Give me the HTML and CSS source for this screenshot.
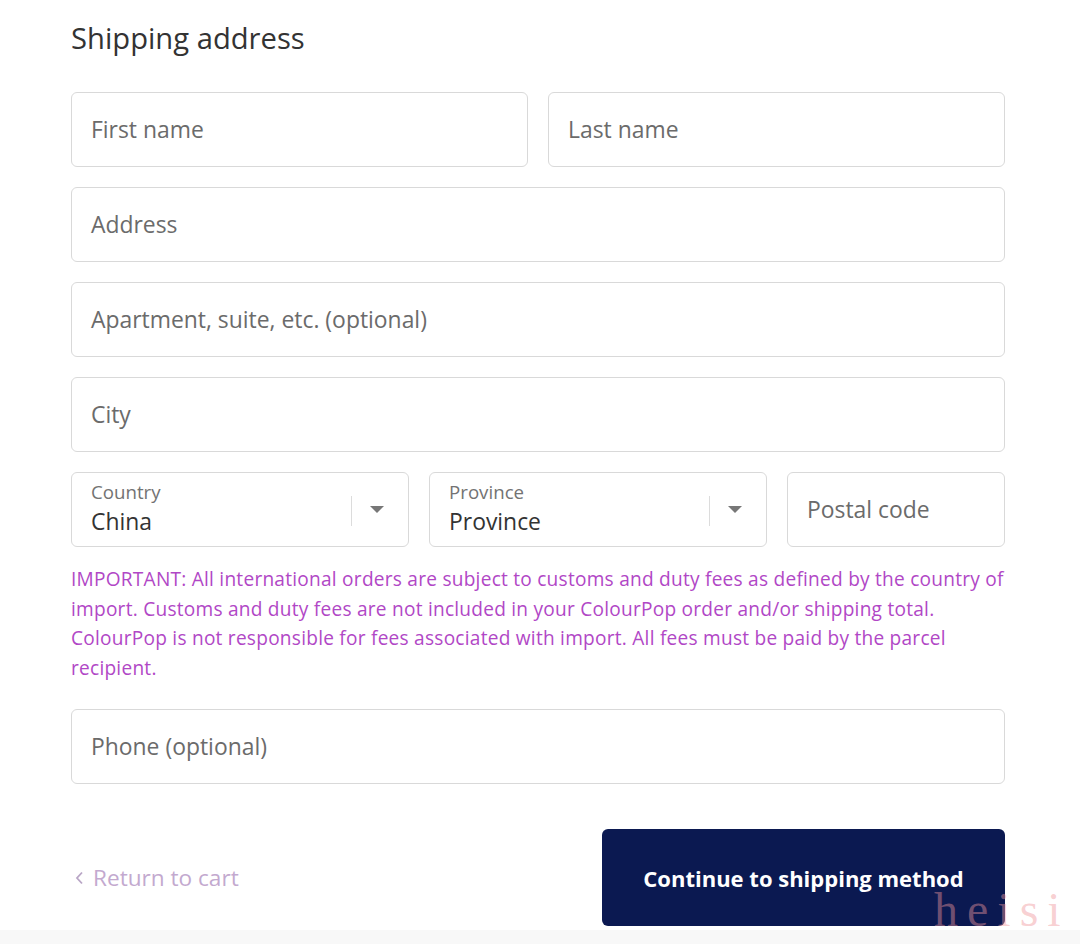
FILE: index.html
```html
<!DOCTYPE html>
<html>
<head>
<meta charset="utf-8">
<link rel="stylesheet" href="styles.css">
</head>
<body>
<div class="page">
  <h2 class="title">Shipping address</h2>
  <div class="fields">
    <div class="row">
      <div class="field half"><span class="ph">First name</span></div>
      <div class="field half"><span class="ph">Last name</span></div>
    </div>
    <div class="field"><span class="ph">Address</span></div>
    <div class="field"><span class="ph">Apartment, suite, etc. (optional)</span></div>
    <div class="field"><span class="ph">City</span></div>
    <div class="row">
      <div class="field select">
        <div class="sel-text">
          <span class="lbl">Country</span>
          <span class="val">China</span>
        </div>
        <span class="divider"></span>
        <span class="caret"></span>
      </div>
      <div class="field select">
        <div class="sel-text">
          <span class="lbl">Province</span>
          <span class="val">Province</span>
        </div>
        <span class="divider"></span>
        <span class="caret"></span>
      </div>
      <div class="field postal"><span class="ph">Postal code</span></div>
    </div>
  </div>
  <p class="note">IMPORTANT: All international orders are subject to customs and duty fees as defined by the country of import. Customs and duty fees are not included in your ColourPop order and/or shipping total. ColourPop is not responsible for fees associated with import. All fees must be paid by the parcel recipient.</p>
  <div class="field"><span class="ph">Phone (optional)</span></div>
  <div class="actions">
    <a class="back"><svg class="chev" width="9" height="14" viewBox="0 0 9 14"><path d="M7 1.5 L2 7 L7 12.5" fill="none" stroke="#b9a6c6" stroke-width="1.8"/></svg><span>Return to cart</span></a>
    <button class="btn">Continue to shipping method</button>
  </div>
</div>
<div class="strip"></div>
<div class="watermark">heisi</div>
</body>
</html>
```

FILE: styles.css
```css
html, body {
  margin: 0;
  padding: 0;
  background: #ffffff;
}
body {
  font-family: "Open Sans", "Noto Sans", sans-serif;
  color: #333333;
  position: relative;
  height: 944px;
  overflow: hidden;
}
.page {
  width: 934px;
  margin-left: 71px;
  padding-top: 18px;
}
.title {
  margin: 0;
  font-size: 29.2px;
  font-weight: 400;
  line-height: 40px;
  color: #333333;
}
.fields {
  margin-top: 34px;
  display: flex;
  flex-direction: column;
  gap: 20px;
}
.row {
  display: flex;
  gap: 20px;
}
.field {
  box-sizing: border-box;
  height: 75px;
  border: 1px solid #d9d9d9;
  border-radius: 6px;
  display: flex;
  align-items: center;
  padding: 0 19px;
  background: #ffffff;
}
.half {
  flex: 1;
}
.ph {
  font-size: 22.9px;
  color: #6b6b6b;
}
.select {
  flex: 0 0 338px;
  position: relative;
  padding-right: 0;
}
.postal {
  flex: 1;
}
.sel-text {
  flex: 1;
  display: flex;
  flex-direction: column;
}
.lbl {
  font-size: 18.7px;
  line-height: 22px;
  color: #737373;
  margin-top: -3px;
}
.val {
  font-size: 22.9px;
  line-height: 28px;
  color: #333333;
  margin-top: 5px;
}
.divider {
  width: 1px;
  height: 30px;
  background: #dcdcdc;
  margin-top: 2px;
}
.caret {
  width: 0;
  height: 0;
  border-left: 7px solid transparent;
  border-right: 7px solid transparent;
  border-top: 7px solid #777777;
  margin: 0 24px 0 18px;
}
.note {
  margin: 18px 0 26px;
  font-size: 19.1px;
  line-height: 29.5px;
  letter-spacing: 0.24px;
  color: #b147c6;
}
.actions {
  margin-top: 45px;
  display: flex;
  justify-content: space-between;
  align-items: center;
}
.back {
  display: flex;
  align-items: center;
  gap: 9px;
  font-size: 22.6px;
  color: #c3a9cf;
  padding-left: 4px;
}
.chev {
  display: block;
  margin-top: 1px;
}
.btn {
  width: 403px;
  height: 97px;
  border: 0;
  border-radius: 6px;
  background: #0b1951;
  color: #ffffff;
  font-family: "Open Sans", "Noto Sans", sans-serif;
  font-size: 22px;
  font-weight: 700;
}
.strip {
  position: absolute;
  left: 0;
  right: 0;
  top: 930px;
  height: 14px;
  background: #f8f8f8;
}
.watermark {
  position: absolute;
  left: 934px;
  top: 880px;
  font-family: "Liberation Serif", serif;
  font-size: 48px;
  letter-spacing: 9px;
  color: rgba(240, 150, 155, 0.45);
  line-height: 60px;
}
```
